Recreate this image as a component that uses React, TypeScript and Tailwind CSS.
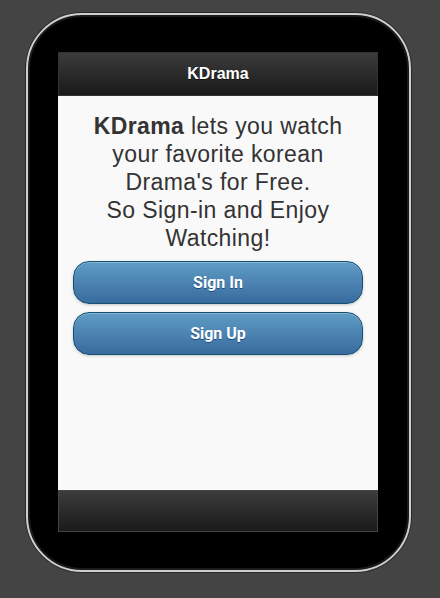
import React from 'react';

export default function App() {
  return (
    <div className="w-[440px] h-[598px] bg-[#444444] pt-[13px] pl-[26px] overflow-hidden">
      {/* phone frame */}
      <div className="w-[385px] h-[559px] rounded-[56px] border-2 border-[#cfcfcf] bg-black shadow-[0_0_0_1px_#2a2a2a,inset_0_0_0_2px_#1a1a1a] pt-[37px] pl-[30px]">
        <div className="w-[320px] h-[480px] flex flex-col">
          {/* header */}
          <div className="h-[44px] border border-[#333] bg-gradient-to-b from-[#3c3c3c] to-[#1a1a1a] flex items-center justify-center">
            <span className="text-white font-bold text-[16px] font-['Liberation_Sans',Arial,sans-serif] [text-shadow:0_1px_0_#111]">
              KDrama
            </span>
          </div>

          {/* content */}
          <div className="flex-1 bg-[#f9f9f9] px-[15px] pt-[16px]">
            <p className="text-center text-[23px] leading-[28px] tracking-[0.4px] text-[#333] font-['Liberation_Sans',Arial,sans-serif] whitespace-nowrap">
              <b>KDrama</b> lets you watch
              <br />
              your favorite korean
              <br />
              Drama's for Free.
              <br />
              So Sign-in and Enjoy
              <br />
              Watching!
            </p>
            <div className="mt-[9px] flex flex-col gap-[8px]">
              {['Sign In', 'Sign Up'].map((label) => (
                <button
                  key={label}
                  className="h-[43px] w-full rounded-[16px] border border-[#145072] bg-gradient-to-b from-[#5f9cc5] to-[#396b9e] text-white font-bold text-[16px] font-['Roboto',sans-serif] [text-shadow:0_1px_0_#194b7e] shadow-[0_1px_3px_rgba(0,0,0,0.2),inset_0_1px_0_rgba(255,255,255,0.25)]"
                >
                  {label}
                </button>
              ))}
            </div>
          </div>

          {/* footer */}
          <div className="h-[42px] border border-[#444] bg-gradient-to-b from-[#3c3c3c] to-[#1a1a1a]" />
        </div>
      </div>
    </div>
  );
}
